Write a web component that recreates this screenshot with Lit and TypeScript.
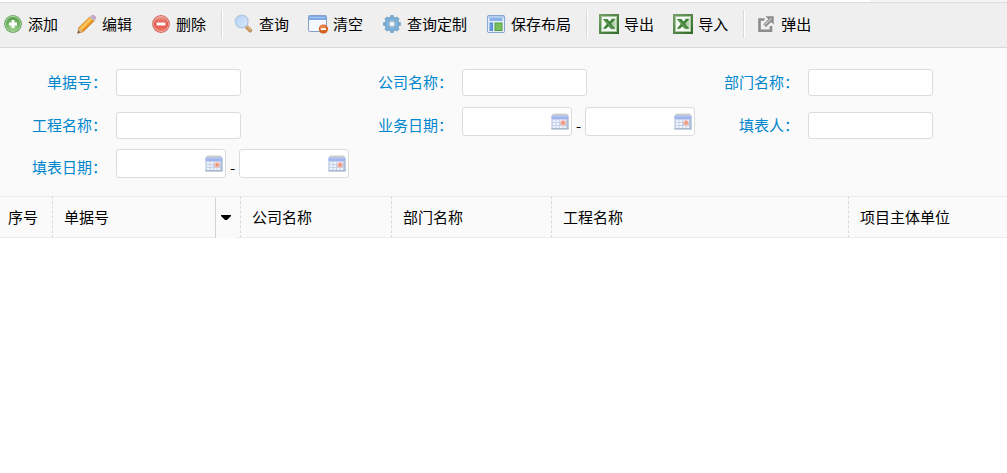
import { LitElement, html, css, svg, TemplateResult } from "lit";
import { customElement } from "lit/decorators.js";

const icon = (body: TemplateResult) =>
  html`<svg class="icon" viewBox="0 0 20 20" width="20" height="20" aria-hidden="true">${body}</svg>`;

const addIcon = icon(svg`
  <defs><radialGradient id="add" cx=".5" cy=".75" r=".7"><stop offset="0" stop-color="#a4d88e"/><stop offset="1" stop-color="#55a04d"/></radialGradient></defs>
  <circle cx="10" cy="10" r="8.9" fill="#68a263"/><circle cx="10" cy="10" r="7.9" fill="#b5dba9"/>
  <circle cx="10" cy="10" r="7.1" fill="url(#add)"/>
  <path d="M8.5 6h3v2.5H14v3h-2.5V14h-3v-2.5H6v-3h2.5z" fill="#fff"/>`);

const editIcon = icon(svg`
  <path d="M.7 19.2 1.8 13.6 13 2.8 17.3 6.8 6.2 17.7z" fill="#f3a62e" stroke="#b97a2c" stroke-width=".7"/>
  <path d="M2.6 14.2 13.5 3.3 15.2 5 4.2 15.900z" fill="#ffc45c"/>
  <path d="M5.2 16.9 15.8 6.2 17 7 6.3 17.6z" fill="#df8c2a"/>
  <path d="M.7 19.2 1.9 14 6 17.7z" fill="#dbb98c"/>
  <path d="M.5 19.4 1.4 16.5 3.6 18.500z" fill="#75625b"/>
  <path d="M12.700 3.200 14.500 1.500 18.500 5.300 17 7.100z" fill="#b9bcc4"/>
  <path d="M14.300 1.500Q15.700.2 17.200 1.400L18.700 2.800Q19.600 4 18.500 5.400z" fill="#c79ac6"/>`);

const deleteIcon = icon(svg`
  <defs><linearGradient id="del" x2="0" y2="1"><stop offset="0" stop-color="#ef9487"/><stop offset=".5" stop-color="#df5148"/><stop offset="1" stop-color="#f47b68"/></linearGradient></defs>
  <circle cx="10" cy="10" r="8.9" fill="#d0675f"/><circle cx="10" cy="10" r="7.9" fill="#f2b0a6"/>
  <circle cx="10" cy="10" r="7.1" fill="url(#del)"/><rect x="5.5" y="8.5" width="9" height="3" rx=".5" fill="#fff"/>`);

const searchIcon = icon(svg`
  <defs><linearGradient id="lens" x2="1" y2="1"><stop offset="0" stop-color="#b3d1f4"/><stop offset="1" stop-color="#dcebfb"/></linearGradient></defs>
  <path d="m12.300 12.500 4 4" stroke="#c69565" stroke-width="4" stroke-linecap="round"/>
  <path d="m13.600 12.600 3 3" stroke="#e3ba8d" stroke-width="1.4" stroke-linecap="round"/>
  <circle cx="7.700" cy="7.500" r="6.300" fill="url(#lens)" stroke="#b4c9e3" stroke-width="1.5"/>`);

const clearIcon = icon(svg`
  <rect x=".5" y="1.5" width="18" height="16" rx=".8" fill="#f4f9ff" stroke="#86a0c8"/>
  <path d="M1 2h17v4H1z" fill="#7da9e6"/><path d="M2 3h15v1H2z" fill="#a8c8f3"/>
  <circle cx="15.400" cy="15" r="4.600" fill="#d2601f"/><circle cx="15" cy="13.800" r="3" fill="#e98249"/>
  <rect x="12.800" y="14.200" width="5.200" height="1.800" fill="#fff"/>`);

const gearIcon = icon(svg`
  <g fill="#7cabd0">${[0, 45, 90, 135].map(
    (a) => svg`<rect x="8" y="1" width="4" height="18" rx="1" transform="rotate(${a} 10 10)"/>`
  )}<circle cx="10" cy="10" r="7.500"/></g>
  <circle cx="10" cy="10" r="5.200" fill="#8ab6d8"/><circle cx="10" cy="10" r="3" fill="#efefef" stroke="#6f9fc5" stroke-width=".6"/>`);

const layoutIcon = icon(svg`
  <rect x="1.5" y="1.5" width="17" height="17" rx="1" fill="#e4eefa" stroke="#86a5d2"/>
  <path d="M2 2h16v2H2z" fill="#b4cdef"/>
  <path d="M3.500 4h13v3h-13z" fill="#8ab3e8"/>
  <path d="M3.500 8.500h3.500V17H3.500z" fill="#4f87d2"/><path d="M4.500 9.500h1v6.500h-1z" fill="#8ab3e8"/>
  <rect x="9" y="9" width="7" height="7.500" fill="#7bbf5a" stroke="#579e43"/>`);

const excelIcon = icon(svg`
  <defs><linearGradient id="xls" x2="1" y2="1"><stop offset="0" stop-color="#77a267"/><stop offset="1" stop-color="#2f6a29"/></linearGradient></defs>
  <path d="M0 0h20v20H0z" fill="url(#xls)"/>
  <path d="M2 2h16v16H2z" fill="#a9c8a0"/><path d="M3 3h14v14H3z" fill="#f7fbf5"/>
  <path d="M12.500 4h4v11.500h-4z" fill="#c3dcbb"/><path d="M12.500 7h4M12.500 10h4M12.500 13h4" stroke="#8fb985" stroke-width=".8"/>
  <path d="M3.800 5h4.700l2 2.500L13 5h3.200L12.200 9.800 16.200 14.800h-4.600L9.500 12.200 7 14.800H3.800L7.800 10z" fill="#3f8037"/>
  <path d="m5.500 5.800 7.600 8.400" stroke="#6a9d5f" stroke-width="1.200"/>`);

const popupIcon = icon(svg`
  <path d="M8.500 5.500H3.500v11.200h11.500V12" fill="none" stroke="#8c8c8c" stroke-width="2.600"/>
  <path d="M9.500 2.300h8.200v8.200l-2.700-2.600-5 5-2.700-2.600 5-5z" fill="#8c8c8c"/>
  <path d="m9 10.700 6.300-6.300" stroke="#d2d2d2" stroke-width="1.200"/>`);

const calendarIcon = html`<svg viewBox="0 0 18 17" width="18" height="17" aria-hidden="true">
  <path d="M2 .5h14l1.500 3v13H.5v-13z" fill="#cfcfd2"/>
  <path d="M.5 2.500h17V6H.5z" fill="#9db4ee"/><path d="M1.500 3h15v1h-15z" fill="#b3c5f3"/>
  <path d="M.5 6h17v10H.5z" fill="#c6d3ea"/>
  <path d="M2 7h2.500v2H2zM5.500 7H8v2H5.500zM9 7h2.500v2H9zM12.500 7H15v2h-2.500zM2 10h2.500v2H2zM5.500 10H8v2H5.500zM2 13h2.500v2H2zM5.500 13H8v2H5.500zM9 13h2.500v2H9zM12.500 13H15v2h-2.500z" fill="#eef3fc"/>
  <path d="M15.500 6h2v10h-2z" fill="#b0bfd8"/>
  <rect x="9.500" y="7.500" width="5" height="5" rx="1" fill="#f5b5a4"/><rect x="11" y="8.500" width="2.500" height="2.500" fill="#ee8f76"/>
  <path d="M.5 15h17v1.500H.5z" fill="#a9b8d2"/></svg>`;

const groups = [
  [
    { icon: addIcon, text: "添加" },
    { icon: editIcon, text: "编辑" },
    { icon: deleteIcon, text: "删除" },
  ],
  [
    { icon: searchIcon, text: "查询" },
    { icon: clearIcon, text: "清空" },
    { icon: gearIcon, text: "查询定制" },
    { icon: layoutIcon, text: "保存布局" },
  ],
  [
    { icon: excelIcon, text: "导出" },
    { icon: excelIcon, text: "导入" },
  ],
  [{ icon: popupIcon, text: "弹出" }],
];

const fields = [
  { id: "billNo", label: "单据号" },
  { id: "company", label: "公司名称" },
  { id: "department", label: "部门名称" },
  { id: "project", label: "工程名称" },
  { id: "businessDate", label: "业务日期", range: true },
  { id: "author", label: "填表人" },
  { id: "fillDate", label: "填表日期", range: true },
];

@customElement("app-root")
export class AppRoot extends LitElement {
  static styles = css`
    :host {
      display: block;
      min-height: 100vh;
      background: #fff;
      color: #000;
      font: 15px/20px "Noto Sans CJK SC", sans-serif;
    }
    * { box-sizing: border-box; }
    button, input { font: inherit; color: inherit; margin: 0; padding: 0; border: 0; background: none; }
    button { cursor: pointer; }
    svg { display: block; flex: none; }
    .strip {
      height: 2px;
      background: linear-gradient(90deg, #fff 86.4%, #f5f5f5 86.4%);
    }
    .toolbar {
      display: flex;
      align-items: center;
      height: 46px;
      padding: 0 3px 2px;
      background: #efefef;
      border-top: 1px solid #dcdcdc;
      border-bottom: 1px solid #d9d9d9;
    }
    .group { display: flex; align-items: center; gap: 19px; }
    .group + .group::before {
      content: "";
      width: 2px;
      height: 28px;
      margin: 0 -8px 0 15px;
      background: linear-gradient(90deg, #d9d9d9 50%, #fff 50%);
    }
    .tool { display: flex; align-items: center; gap: 5px; white-space: nowrap; }
    .form {
      display: grid;
      grid-template-columns: 346fr 346fr 315fr;
      grid-template-rows: 43px 43px 41px;
      padding: 13px 0 8px;
      background: #fafafa;
    }
    .field { display: flex; align-items: center; min-width: 0; }
    .label {
      flex: none;
      width: 107px;
      margin-right: 9px;
      padding-bottom: 2px;
      text-align: right;
      color: #0086cd;
      white-space: nowrap;
    }
    .text, .date { background: #fff; border: 1px solid #dcdcdc; border-radius: 3px; }
    .text { width: 125px; height: 27px; padding: 0 5px; }
    .range { display: flex; flex: none; align-items: center; }
    .date { display: flex; width: 110px; height: 29px; margin-bottom: 8px; padding: 0 2px 0 5px; }
    .day { flex: 1; min-width: 0; }
    .pick { display: flex; align-items: center; }
    .dash { width: 13px; text-align: center; }
    .grid { width: 100%; border-collapse: separate; border-spacing: 0; table-layout: fixed; }
    .head {
      position: relative;
      height: 42px;
      padding: 0 11px;
      background: #fafafa;
      border: 0 dashed #d9d9d9;
      border-top: 1px solid #ebebeb;
      border-bottom: 1px solid #ebebeb;
      font-weight: 400;
      text-align: left;
      white-space: nowrap;
    }
    .head:not(:last-child) { border-right-width: 1px; }
    .head:first-child { padding-left: 8px; }
    .c1 { width: 53px; }
    .c2 { width: 188px; }
    .c3 { width: 151px; }
    .c4 { width: 160px; }
    .c5 { width: 297px; }
    .menu {
      position: absolute;
      top: 1px;
      right: 4px;
      bottom: -1px;
      width: 21px;
      padding-bottom: 2px;
      background: #fafafa;
      border-left: 1px solid #d4d4d4;
    }
    .arrow { margin: 0 auto; }
  `;

  private dateBox(id: string, name: string) {
    return html`<span class="date">
      <input class="day" id=${id} type="text" aria-label=${name} />
      <button class="pick" type="button" aria-label=${name}>${calendarIcon}</button>
    </span>`;
  }

  render() {
    const columns = ["序号", "单据号", "公司名称", "部门名称", "工程名称", "项目主体单位"];
    return html`
      <div class="strip"></div>
      <div class="toolbar" role="toolbar">
        ${groups.map(
          (g) => html`<div class="group">
            ${g.map((t) => html`<button class="tool" type="button">${t.icon}<span>${t.text}</span></button>`)}
          </div>`
        )}
      </div>
      <form class="form">
        ${fields.map(
          (f) => html`<div class="field">
            <label class="label" for=${f.id}>${f.label}：</label>
            ${f.range
              ? html`<div class="range">
                  ${this.dateBox(f.id, f.label)}<span class="dash">-</span>${this.dateBox(f.id + "End", f.label)}
                </div>`
              : html`<input class="text" id=${f.id} type="text" />`}
          </div>`
        )}
      </form>
      <table class="grid">
        <colgroup>
          <col class="c1" /><col class="c2" /><col class="c3" /><col class="c4" /><col class="c5" /><col />
        </colgroup>
        <thead>
          <tr>
            ${columns.map(
              (c, i) => html`<th class="head" scope="col">
                ${c}${i === 1
                  ? html`<button class="menu" type="button" aria-label=${c}>
                      <svg class="arrow" width="10" height="5" viewBox="0 0 10 5"><path d="M0 0h10v1L6.500 4.500Q5 5.500 3.500 4.500L0 1z" /></svg>
                    </button>`
                  : ""}
              </th>`
            )}
          </tr>
        </thead>
      </table>
    `;
  }
}
